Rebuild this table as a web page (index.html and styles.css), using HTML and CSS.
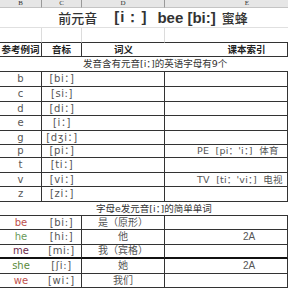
FILE: index.html
```html
<!DOCTYPE html>
<html>
<head>
<meta charset="utf-8">
<link rel="stylesheet" href="styles.css">
</head>
<body>
<div class="sheet">
  <div class="colhead">B</div>
  <div class="colhead">C</div>
  <div class="colhead">D</div>
  <div class="colhead">E</div>

  <div class="title merged">
    <span class="t-cjk">前元音</span><span class="t-ipa">[i：]</span><span class="t-en">bee [bi:]</span><span class="t-cjk">蜜蜂</span>
  </div>

  <div class="blank"></div>
  <div class="blank"></div>
  <div class="blank"></div>
  <div class="blank last"></div>

  <div class="cell head">参考例词</div>
  <div class="cell head">音标</div>
  <div class="cell head">词义</div>
  <div class="cell head ecol">课本索引</div>

  <div class="cell merged section">发音含有元音[i：]的英语字母有9个</div>

  <div class="cell">b</div><div class="cell ipa">[bi：]</div><div class="cell"></div><div class="cell"></div>
  <div class="cell">c</div><div class="cell ipa">[si:]</div><div class="cell"></div><div class="cell"></div>
  <div class="cell">d</div><div class="cell ipa">[di：]</div><div class="cell"></div><div class="cell"></div>
  <div class="cell">e</div><div class="cell ipa">[i：]</div><div class="cell"></div><div class="cell"></div>
  <div class="cell">g</div><div class="cell ipa">[dʒi：]</div><div class="cell"></div><div class="cell"></div>
  <div class="cell">p</div><div class="cell ipa">[pi：]</div><div class="cell"></div><div class="cell ref">PE&nbsp; [pi：'i：]&nbsp; 体育</div>
  <div class="cell">t</div><div class="cell ipa">[ti：]</div><div class="cell"></div><div class="cell"></div>
  <div class="cell">v</div><div class="cell ipa">[vi：]</div><div class="cell"></div><div class="cell ref">TV&nbsp; [ti：'vi：]&nbsp; 电视</div>
  <div class="cell">z</div><div class="cell ipa">[zi：]</div><div class="cell"></div><div class="cell"></div>

  <div class="cell merged section2">字母e发元音[i：]的简单单词</div>

  <div class="cell red">be</div><div class="cell ipa">[bi:]</div><div class="cell">是（原形）</div><div class="cell"></div>
  <div class="cell green">he</div><div class="cell ipa">[hi:]</div><div class="cell">他</div><div class="cell num">2A</div>
  <div class="cell plum thick">me</div><div class="cell ipa thick">[mi:]</div><div class="cell thick">我（宾格）</div><div class="cell thick"></div>
  <div class="cell olive">she</div><div class="cell ipa">[ʃi:]</div><div class="cell">她</div><div class="cell num">2A</div>
  <div class="cell red">we</div><div class="cell ipa">[wi：]</div><div class="cell">我们</div><div class="cell"></div>
</div>
</body>
</html>
```

FILE: styles.css
```css
* { box-sizing: border-box; }

html, body {
  margin: 0;
  padding: 0;
  background: #ffffff;
  overflow: hidden;
}

.sheet {
  display: grid;
  grid-template-columns: 42px 40px 83px 123px;
  grid-template-rows: 8px 20px 15px 14px 15px 15px 15px 14px 15px 14px 13px 15px 14px 15px 14px 14px 15px 14px 15px 14px;
  width: 288px;
  font-family: "DejaVu Sans", "Noto Sans CJK SC", sans-serif;
  font-size: 10px;
  color: #555;
}

.colhead {
  background: #e6e6e6;
  border-right: 1px solid #9a9a9a;
  border-bottom: 1px solid #c4c4c4;
  font-family: "Liberation Serif", serif;
  font-size: 7px;
  line-height: 7px;
  color: #333;
  text-align: center;
  overflow: hidden;
}

.colhead:nth-child(4) {
  border-right: none;
  padding-left: 41px;
}

.title {
  grid-column: 1 / -1;
  border-bottom: 1px solid #e0e0e0;
  display: flex;
  align-items: center;
  justify-content: center;
  padding-left: 18px;
  color: #111;
  white-space: nowrap;
}

.t-cjk {
  font-family: "Noto Sans CJK SC", sans-serif;
  font-size: 13px;
  font-weight: 500;
}

.t-ipa {
  font-family: "Liberation Sans", sans-serif;
  font-weight: 700;
  font-size: 15px;
  margin-left: 17px;
  margin-right: 10px;
  letter-spacing: 1px;
}

.t-en {
  font-family: "Liberation Sans", sans-serif;
  font-weight: 700;
  font-size: 15px;
  margin-right: 6px;
}

.blank {
  border-right: 1px solid #dcdcdc;
  border-bottom: 1px solid #333;
}

.blank.last { border-right: none; }

.cell {
  border-right: 1px solid #333;
  border-bottom: 1px solid #333;
  display: flex;
  align-items: center;
  justify-content: center;
  white-space: nowrap;
  line-height: 1;
}

.cell:nth-child(4n) { border-right: none; }

.head {
  font-family: "Noto Sans CJK SC", sans-serif;
  font-weight: 700;
  font-size: 9.5px;
  color: #222;
}

.ecol { padding-left: 41px; }

.merged {
  grid-column: 1 / -1;
  font-family: "DejaVu Sans", "Noto Sans CJK SC", sans-serif;
  font-size: 9.5px;
  color: #333;
  border-right: none;
}

.section {
  justify-content: flex-start;
  padding-left: 83px;
}

.section2 {
  justify-content: flex-start;
  padding-left: 96px;
}

.ipa {
  letter-spacing: 0.6px;
}

.ref {
  justify-content: flex-start;
  padding-left: 32px;
  font-size: 9.5px;
  letter-spacing: 0.2px;
}

.num {
  padding-left: 46px;
  font-family: "Liberation Sans", sans-serif;
}

.thick {
  border-bottom: 2px solid #111;
}

.red { color: #c0504d; }
.green { color: #6a9a5a; }
.plum { color: #6a2a4a; }
.olive { color: #5a8a3a; }
```
